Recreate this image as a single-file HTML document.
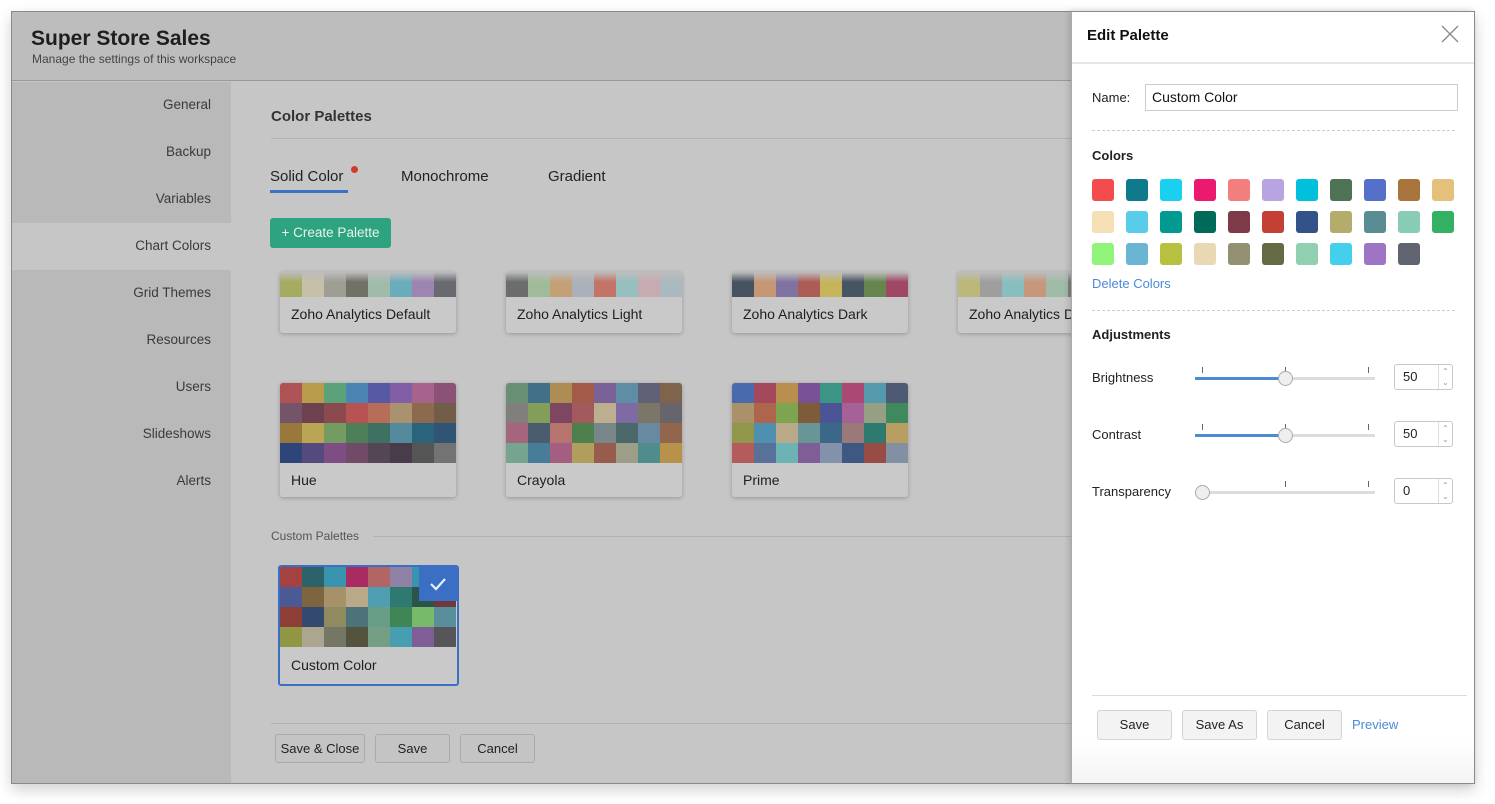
<!DOCTYPE html>
<html><head><meta charset="utf-8">
<style>
*{box-sizing:border-box;margin:0;padding:0}
body{width:1495px;height:804px;background:#fff;font-family:"Liberation Sans",sans-serif;position:relative;overflow:hidden;color:#222}
.a{position:absolute}
#frame{left:11px;top:11px;width:1464px;height:773px;border:1px solid #8a8a8a;box-shadow:0 6px 14px rgba(0,0,0,.18);background:#c6c6c6;overflow:hidden}
.side{font-size:13.5px;color:#3a3a3a;text-align:right;width:199px;left:0}
.card{position:absolute;width:176px;background:#c9c9c9;border-radius:3px;box-shadow:0 1px 4px rgba(0,0,0,.25);overflow:hidden}
.sw{display:grid;grid-template-columns:repeat(8,22px);grid-auto-rows:20px;filter:brightness(.94) saturate(.9)}
.sw i{display:block}
.card .lb{height:34px;line-height:34px;padding-left:11px;font-size:14px;color:#1e1e1e}
.btn{position:absolute;height:29px;border:1px solid #aaa;border-radius:3px;background:#c4c4c4;font-size:13px;text-align:center;line-height:27px;color:#222}
.rb{position:absolute;height:30px;border:1px solid #d4d4d4;border-radius:3px;background:#f3f3f3;font-size:13px;text-align:center;line-height:28px;color:#222}
.cs{position:absolute;width:22px;height:22px;border-radius:3px}
.lab{position:absolute;font-size:13px;color:#222}
.trk{position:absolute;height:3px;background:#dcdcdc;left:1195px;width:180px}
.tick{position:absolute;width:1px;height:6px;background:#666}
.thumb{position:absolute;width:15px;height:15px;border-radius:50%;background:#eee;border:1px solid #aaa}
.num{position:absolute;left:1394px;width:59px;height:26px;border:1px solid #c8c8c8;border-radius:3px;font-size:13px;line-height:24px;padding-left:8px}
.num:after{content:"";position:absolute;left:43px;top:0;width:1px;height:24px;background:#ddd}
.num b{position:absolute;left:47px;font-size:8px;color:#999;font-weight:normal;line-height:8px}
</style></head><body>
<div id="frame" class="a">
 <div class="a" style="left:0;top:0;width:1464px;height:69px;background:#bdbdbd;border-bottom:1px solid #999"></div>
 <div class="a" style="left:19px;top:15px;font-size:21px;font-weight:bold;color:#1e1e1e">Super Store Sales</div>
 <div class="a" style="left:20px;top:40px;font-size:12px;color:#444">Manage the settings of this workspace</div>
 <div class="a" style="left:0;top:70px;width:219px;height:703px;background:#b9b9b9"></div>
 <div class="a" style="left:0;top:211px;width:219px;height:47px;background:#c6c6c6"></div>
 <div class="a side" style="top:85px">General</div>
 <div class="a side" style="top:132px">Backup</div>
 <div class="a side" style="top:179px">Variables</div>
 <div class="a side" style="top:226px">Chart Colors</div>
 <div class="a side" style="top:273px">Grid Themes</div>
 <div class="a side" style="top:320px">Resources</div>
 <div class="a side" style="top:367px">Users</div>
 <div class="a side" style="top:414px">Slideshows</div>
 <div class="a side" style="top:461px">Alerts</div>
</div>

<div class="a" style="left:271px;top:108px;font-size:15px;font-weight:bold;color:#333">Color Palettes</div>
<div class="a" style="left:271px;top:138px;width:800px;height:1px;background:#b2b2b2"></div>
<div class="a" style="left:270px;top:168px;font-size:15px;color:#222">Solid Color</div>
<div class="a" style="left:351px;top:166px;width:7px;height:7px;border-radius:50%;background:#d23a2a"></div>
<div class="a" style="left:270px;top:190px;width:78px;height:3px;background:#3a73c4"></div>
<div class="a" style="left:401px;top:168px;font-size:15px;color:#222">Monochrome</div>
<div class="a" style="left:548px;top:168px;font-size:15px;color:#222">Gradient</div>
<div class="a" style="left:270px;top:218px;width:121px;height:30px;background:#2ea37f;border-radius:3px;color:#e8f2ee;font-size:13.5px;line-height:30px;text-align:center">+ Create Palette</div>

<div class="card" style="left:280px;top:272px;height:61px"><div class="sw" style="grid-auto-rows:25px"><i style="background:linear-gradient(#c9c9c9,#b0b860 40%)"></i><i style="background:linear-gradient(#c9c9c9,#d4ccb0 40%)"></i><i style="background:linear-gradient(#c9c9c9,#a8a89a 40%)"></i><i style="background:linear-gradient(#c9c9c9,#7a786a 40%)"></i><i style="background:linear-gradient(#c9c9c9,#a8c8b4 40%)"></i><i style="background:linear-gradient(#c9c9c9,#6ab8cc 40%)"></i><i style="background:linear-gradient(#c9c9c9,#a88cc0 40%)"></i><i style="background:linear-gradient(#c9c9c9,#707078 40%)"></i></div><div class="lb">Zoho Analytics Default</div></div>
<div class="card" style="left:506px;top:272px;height:61px"><div class="sw" style="grid-auto-rows:25px"><i style="background:linear-gradient(#c9c9c9,#707472 40%)"></i><i style="background:linear-gradient(#c9c9c9,#a8c8a0 40%)"></i><i style="background:linear-gradient(#c9c9c9,#d4aa78 40%)"></i><i style="background:linear-gradient(#c9c9c9,#b4bcc8 40%)"></i><i style="background:linear-gradient(#c9c9c9,#d8786a 40%)"></i><i style="background:linear-gradient(#c9c9c9,#9ccccc 40%)"></i><i style="background:linear-gradient(#c9c9c9,#d8b4bc 40%)"></i><i style="background:linear-gradient(#c9c9c9,#b4c4cc 40%)"></i></div><div class="lb">Zoho Analytics Light</div></div>
<div class="card" style="left:732px;top:272px;height:61px"><div class="sw" style="grid-auto-rows:25px"><i style="background:linear-gradient(#c9c9c9,#4a5868 40%)"></i><i style="background:linear-gradient(#c9c9c9,#d8a078 40%)"></i><i style="background:linear-gradient(#c9c9c9,#8a7ab0 40%)"></i><i style="background:linear-gradient(#c9c9c9,#c06058 40%)"></i><i style="background:linear-gradient(#c9c9c9,#d4c058 40%)"></i><i style="background:linear-gradient(#c9c9c9,#4a5a6a 40%)"></i><i style="background:linear-gradient(#c9c9c9,#6a904e 40%)"></i><i style="background:linear-gradient(#c9c9c9,#b04a6a 40%)"></i></div><div class="lb">Zoho Analytics Dark</div></div>
<div class="card" style="left:958px;top:272px;height:61px"><div class="sw" style="grid-auto-rows:25px"><i style="background:linear-gradient(#c9c9c9,#c8c47a 40%)"></i><i style="background:linear-gradient(#c9c9c9,#a8a8a8 40%)"></i><i style="background:linear-gradient(#c9c9c9,#8ccccc 40%)"></i><i style="background:linear-gradient(#c9c9c9,#d8a080 40%)"></i><i style="background:linear-gradient(#c9c9c9,#a8c8b0 40%)"></i><i style="background:linear-gradient(#c9c9c9,#888 40%)"></i><i style="background:linear-gradient(#c9c9c9,#aaa 40%)"></i><i style="background:linear-gradient(#c9c9c9,#999 40%)"></i></div><div class="lb" style="white-space:nowrap">Zoho Analytics Dark</div></div>

<div class="card" style="left:280px;top:383px;height:114px"><div class="sw">
<i style="background:#c0565a"></i><i style="background:#c8a548"></i><i style="background:#5aaf7f"></i><i style="background:#4a8fc2"></i><i style="background:#5c5fb5"></i><i style="background:#8d62b8"></i><i style="background:#b8669a"></i><i style="background:#9a5680"></i>
<i style="background:#7e5870"></i><i style="background:#7a4456"></i><i style="background:#9a4e52"></i><i style="background:#cc5656"></i><i style="background:#c8735a"></i><i style="background:#b89a72"></i><i style="background:#98704e"></i><i style="background:#7a634a"></i>
<i style="background:#a87e3a"></i><i style="background:#c8b050"></i><i style="background:#78a860"></i><i style="background:#4e8a5a"></i><i style="background:#3e7a68"></i><i style="background:#5494a8"></i><i style="background:#2a6a88"></i><i style="background:#2e5a80"></i>
<i style="background:#2e4a88"></i><i style="background:#5a4e8a"></i><i style="background:#8a5090"></i><i style="background:#7a4e70"></i><i style="background:#5a4a5a"></i><i style="background:#4e3e50"></i><i style="background:#5a5a5a"></i><i style="background:#7a7a7a"></i>
</div><div class="lb">Hue</div></div>
<div class="card" style="left:506px;top:383px;height:114px"><div class="sw">
<i style="background:#6a9a7a"></i><i style="background:#427896"></i><i style="background:#ba9652"></i><i style="background:#b45e4a"></i><i style="background:#8466a6"></i><i style="background:#5e98b4"></i><i style="background:#666680"></i><i style="background:#8a6a4e"></i>
<i style="background:#8a8686"></i><i style="background:#8aa85a"></i><i style="background:#8a4a6a"></i><i style="background:#b45e62"></i><i style="background:#c8ba96"></i><i style="background:#8a70b4"></i><i style="background:#847e6e"></i><i style="background:#6e6a72"></i>
<i style="background:#b46a86"></i><i style="background:#4e6278"></i><i style="background:#c87a74"></i><i style="background:#4e8a4e"></i><i style="background:#7e8e92"></i><i style="background:#4e6e72"></i><i style="background:#6a92b0"></i><i style="background:#a06a4e"></i>
<i style="background:#7ab096"></i><i style="background:#4886a8"></i><i style="background:#b4628a"></i><i style="background:#bca85a"></i><i style="background:#a86050"></i><i style="background:#a8a88e"></i><i style="background:#4e9696"></i><i style="background:#c89a46"></i>
</div><div class="lb">Crayola</div></div>
<div class="card" style="left:732px;top:383px;height:114px"><div class="sw">
<i style="background:#4a72c0"></i><i style="background:#b84a60"></i><i style="background:#c89848"></i><i style="background:#8456a6"></i><i style="background:#38a08e"></i><i style="background:#c04a7e"></i><i style="background:#54a4bc"></i><i style="background:#52607e"></i>
<i style="background:#b89a6a"></i><i style="background:#c06a4e"></i><i style="background:#84b04e"></i><i style="background:#8a6038"></i><i style="background:#4e5aa6"></i><i style="background:#b466a4"></i><i style="background:#9eaa8a"></i><i style="background:#3e9460"></i>
<i style="background:#9aa048"></i><i style="background:#4e9ac0"></i><i style="background:#c8b48e"></i><i style="background:#6aa0a0"></i><i style="background:#3a7096"></i><i style="background:#a88080"></i><i style="background:#2a8478"></i><i style="background:#c8a860"></i>
<i style="background:#c86060"></i><i style="background:#5a78a8"></i><i style="background:#6ec0c0"></i><i style="background:#8a62a6"></i><i style="background:#8a9ab8"></i><i style="background:#405e8e"></i><i style="background:#a85048"></i><i style="background:#8a98b0"></i>
</div><div class="lb">Prime</div></div>

<div class="a" style="left:271px;top:529px;font-size:12px;color:#555">Custom Palettes</div>
<div class="a" style="left:373px;top:536px;width:698px;height:1px;background:#b2b2b2"></div>

<div class="card" style="left:278px;top:565px;width:181px;height:121px;border:2px solid #3a6fc4;box-shadow:none"><div class="sw">
<i style="background:#b84444"></i><i style="background:#2a6a72"></i><i style="background:#34a0c0"></i><i style="background:#c02a6a"></i><i style="background:#c46a6a"></i><i style="background:#9a8ab4"></i><i style="background:#34a0c0"></i><i style="background:#3a6fc4"></i>
<i style="background:#4e5ea6"></i><i style="background:#8a6a40"></i><i style="background:#b49a6a"></i><i style="background:#c8b48e"></i><i style="background:#4eaac0"></i><i style="background:#2a8478"></i><i style="background:#2a5a50"></i><i style="background:#7a3a40"></i>
<i style="background:#a04038"></i><i style="background:#344e7a"></i><i style="background:#9a9460"></i><i style="background:#4e7a84"></i><i style="background:#6aa88e"></i><i style="background:#3e9058"></i><i style="background:#78c86a"></i><i style="background:#5a98a8"></i>
<i style="background:#9aa040"></i><i style="background:#b8b096"></i><i style="background:#7e7e6a"></i><i style="background:#5a5a40"></i><i style="background:#78aa8a"></i><i style="background:#44aac0"></i><i style="background:#8a62a6"></i><i style="background:#5a5a60"></i>
</div><div class="lb" style="line-height:36px">Custom Color</div>
<div class="a" style="left:139px;top:0;width:38px;height:34px;background:#3a6fc4"><svg width="38" height="34"><path d="M12 17 L17 22 L26 12" stroke="#e6eef8" stroke-width="2.2" fill="none"/></svg></div>
</div>

<div class="a" style="left:271px;top:723px;width:800px;height:1px;background:#b2b2b2"></div>
<div class="btn" style="left:275px;top:734px;width:90px">Save &amp; Close</div>
<div class="btn" style="left:375px;top:734px;width:75px">Save</div>
<div class="btn" style="left:460px;top:734px;width:75px">Cancel</div>

<div class="a" style="left:1071px;top:11px;width:404px;height:773px;background:#fff;border:1px solid #8a8a8a;border-left:1px solid #aaa;box-shadow:-2px 0 6px rgba(0,0,0,.15)"></div>
<div class="a" style="left:1072px;top:740px;width:402px;height:43px;background:linear-gradient(#fff,#f4f4f4)"></div>
<div class="a" style="left:1087px;top:27px;font-size:15px;font-weight:bold;color:#111">Edit Palette</div>
<svg class="a" style="left:1441px;top:25px" width="18" height="18"><path d="M1 1L17 17M17 1L1 17" stroke="#888" stroke-width="1.3"/></svg>
<div class="a" style="left:1072px;top:62px;width:402px;height:2px;background:#e6e6e6"></div>
<div class="lab" style="left:1092px;top:90px">Name:</div>
<div class="a" style="left:1145px;top:84px;width:313px;height:27px;border:1px solid #ccc;font-size:14px;line-height:25px;padding-left:6px;color:#111">Custom Color</div>
<div class="a" style="left:1092px;top:130px;width:363px;border-top:1px dashed #ccc"></div>
<div class="lab" style="left:1092px;top:148px;font-weight:bold">Colors</div>

<div class="cs" style="left:1092px;top:179px;background:#f44c4c"></div><div class="cs" style="left:1126px;top:179px;background:#0f7a8c"></div><div class="cs" style="left:1160px;top:179px;background:#1ad0f0"></div><div class="cs" style="left:1194px;top:179px;background:#ec1a6e"></div><div class="cs" style="left:1228px;top:179px;background:#f27e7e"></div><div class="cs" style="left:1262px;top:179px;background:#b8a4e0"></div><div class="cs" style="left:1296px;top:179px;background:#00c0dc"></div><div class="cs" style="left:1330px;top:179px;background:#4e7254"></div><div class="cs" style="left:1364px;top:179px;background:#5470c8"></div><div class="cs" style="left:1398px;top:179px;background:#a8743c"></div><div class="cs" style="left:1432px;top:179px;background:#e4c07a"></div>
<div class="cs" style="left:1092px;top:211px;background:#f4e0b4"></div><div class="cs" style="left:1126px;top:211px;background:#58cce8"></div><div class="cs" style="left:1160px;top:211px;background:#009a90"></div><div class="cs" style="left:1194px;top:211px;background:#006a5a"></div><div class="cs" style="left:1228px;top:211px;background:#7e3a48"></div><div class="cs" style="left:1262px;top:211px;background:#c44034"></div><div class="cs" style="left:1296px;top:211px;background:#34528a"></div><div class="cs" style="left:1330px;top:211px;background:#b4ac6a"></div><div class="cs" style="left:1364px;top:211px;background:#5a8c94"></div><div class="cs" style="left:1398px;top:211px;background:#88ccb4"></div><div class="cs" style="left:1432px;top:211px;background:#34b064"></div>
<div class="cs" style="left:1092px;top:243px;background:#90f47a"></div><div class="cs" style="left:1126px;top:243px;background:#6ab4d4"></div><div class="cs" style="left:1160px;top:243px;background:#b8c040"></div><div class="cs" style="left:1194px;top:243px;background:#e8d8b4"></div><div class="cs" style="left:1228px;top:243px;background:#949074"></div><div class="cs" style="left:1262px;top:243px;background:#666a44"></div><div class="cs" style="left:1296px;top:243px;background:#90d0b0"></div><div class="cs" style="left:1330px;top:243px;background:#44d0ec"></div><div class="cs" style="left:1364px;top:243px;background:#9e74c4"></div><div class="cs" style="left:1398px;top:243px;background:#606470"></div>

<div class="lab" style="left:1092px;top:276px;color:#4a8ad6">Delete Colors</div>
<div class="a" style="left:1092px;top:310px;width:363px;border-top:1px dashed #ccc"></div>
<div class="lab" style="left:1092px;top:327px;font-weight:bold">Adjustments</div>

<div class="lab" style="left:1092px;top:370px">Brightness</div>
<div class="trk" style="top:377px"></div><div class="a" style="left:1195px;top:377px;width:90px;height:3px;background:#4a8ad6"></div>
<div class="tick" style="left:1202px;top:367px"></div><div class="tick" style="left:1285px;top:367px"></div><div class="tick" style="left:1368px;top:367px"></div>
<div class="thumb" style="left:1278px;top:371px"></div>
<div class="num" style="top:364px">50<b style="top:3px">&#8963;</b><b style="top:14px">&#8964;</b></div>

<div class="lab" style="left:1092px;top:427px">Contrast</div>
<div class="trk" style="top:434px"></div><div class="a" style="left:1195px;top:434px;width:90px;height:3px;background:#4a8ad6"></div>
<div class="tick" style="left:1202px;top:424px"></div><div class="tick" style="left:1285px;top:424px"></div><div class="tick" style="left:1368px;top:424px"></div>
<div class="thumb" style="left:1278px;top:428px"></div>
<div class="num" style="top:421px">50<b style="top:3px">&#8963;</b><b style="top:14px">&#8964;</b></div>

<div class="lab" style="left:1092px;top:484px">Transparency</div>
<div class="trk" style="top:491px"></div>
<div class="tick" style="left:1285px;top:481px"></div><div class="tick" style="left:1368px;top:481px"></div>
<div class="thumb" style="left:1195px;top:485px"></div>
<div class="num" style="top:478px">0<b style="top:3px">&#8963;</b><b style="top:14px">&#8964;</b></div>

<div class="a" style="left:1092px;top:695px;width:375px;height:1px;background:#ddd"></div>
<div class="rb" style="left:1097px;top:710px;width:75px">Save</div>
<div class="rb" style="left:1182px;top:710px;width:75px">Save As</div>
<div class="rb" style="left:1267px;top:710px;width:75px">Cancel</div>
<div class="lab" style="left:1352px;top:717px;color:#4a8ad6">Preview</div>
</body></html>
